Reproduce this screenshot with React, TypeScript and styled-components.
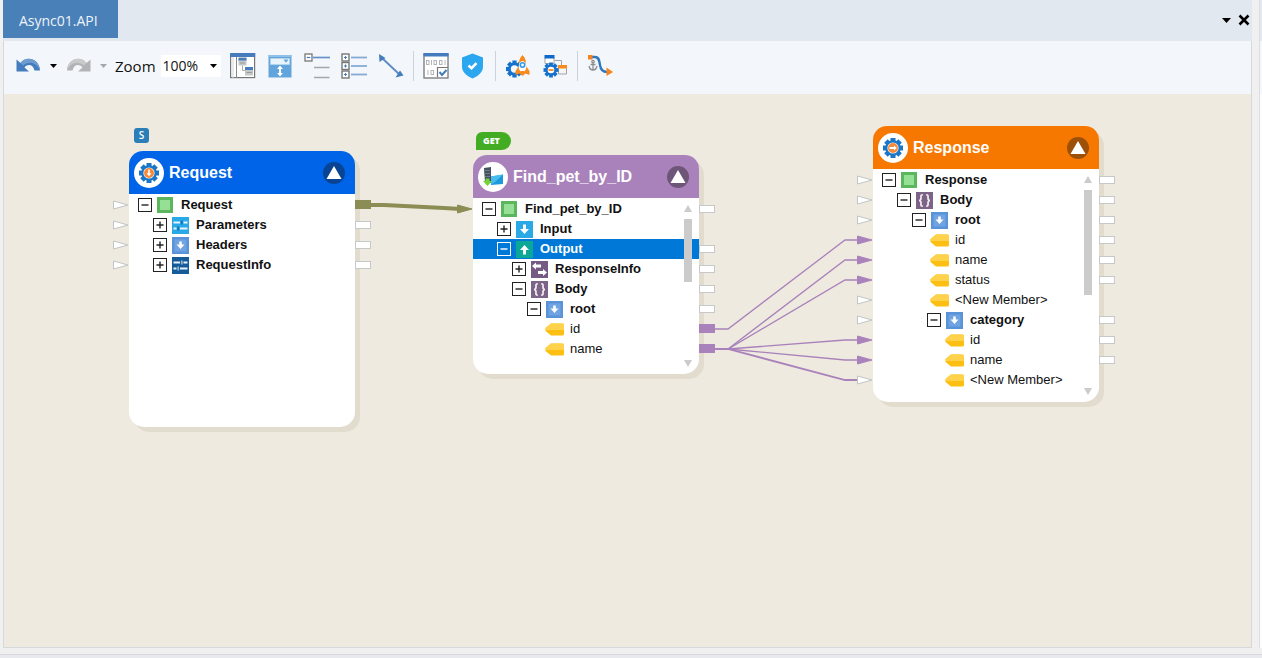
import React, { useState } from "react";
import styled, { createGlobalStyle } from "styled-components";

const GlobalStyle = createGlobalStyle`
  *, *::before, *::after { box-sizing: border-box; }
  body {
    margin: 0;
    background: #f0f0f0;
    font-family: "Liberation Sans", Arial, sans-serif;
    color: #111;
  }
  button { border: 0; padding: 0; background: none; font: inherit; color: inherit; }
  svg { display: block; }
  ul { list-style: none; margin: 0; padding: 0; }
`;

const uiFont = `"Open Sans", "Noto Sans", sans-serif`;

/* ---------- shell ---------- */

const Shell = styled.div`
  display: grid;
  grid-template-columns: minmax(0, 1fr) 3px;
  grid-template-rows: minmax(0, 1fr) 4px;
  column-gap: 7px;
  row-gap: 6px;
  min-height: 100vh;
`;

const Editor = styled.main`
  display: flex;
  flex-direction: column;
  padding-left: 3px;
`;

const DockEdge = styled.div`
  border-left: 1px solid #dcdde0;
  background: linear-gradient(#e1e8ef 41px, #f3f6fa 41px, #f3f6fa 94px, #fdfdfd 94px);
`;

const StatusEdge = styled.div`
  grid-column: 1 / -1;
  border-top: 1px solid #d8d9df;
  background: #e8e9ee;
`;

const TabBar = styled.header`
  display: flex;
  align-items: flex-start;
  height: 41px;
  background: #e1e8ef;
`;

const Tab = styled.button`
  height: 38px;
  padding: 2px 20px 0 16px;
  background: #4a80b8;
  color: #eef3f9;
  font-family: ${uiFont};
  font-size: 14px;
`;

const TabActions = styled.div`
  display: flex;
  align-items: center;
  gap: 6px;
  height: 38px;
  margin-left: auto;
  padding: 2px 2px 0 0;
`;

const TinyButton = styled.button`
  display: grid;
  place-items: center;
  width: ${(p: { $w: number }) => p.$w}px;
  height: 20px;
`;

const Frame = styled.section`
  flex: 1;
  display: flex;
  flex-direction: column;
  border: 1px solid #d6d9db;
  border-top: 0;
`;

/* ---------- toolbar ---------- */

const Toolbar = styled.div`
  display: flex;
  align-items: center;
  height: 53px;
  padding: 0 11px 3px;
  background: #f3f7fb;
`;

const History = styled.div`
  display: flex;
  align-items: center;
  gap: 7px;
`;

const ZoomLabel = styled.label`
  display: flex;
  align-items: center;
  gap: 5px;
  margin: 0 9px 0 7px;
  font-family: ${uiFont};
  font-size: 15px;
`;

const SelectWrap = styled.span`
  position: relative;
  display: block;
  background: #fff;
`;

const ZoomSelect = styled.select`
  display: block;
  appearance: none;
  width: 60px;
  height: 22px;
  padding: 0 2px 2px;
  border: 0;
  background: transparent;
  font-family: ${uiFont};
  font-size: 14px;
  color: #111;
`;

const SelectArrow = styled.span`
  position: absolute;
  right: 4px;
  top: 9px;
  pointer-events: none;
`;

const ToolGroup = styled.div`
  display: flex;
  align-items: center;
  gap: 11px;
  height: 30px;
  & + & {
    margin-left: 9px;
    padding-left: 9px;
    border-left: 1px solid #cdd3da;
  }
`;

const ToolButton = styled.button`
  display: grid;
  place-items: center;
  width: 26px;
  height: 28px;
`;

/* ---------- canvas ---------- */

const Canvas = styled.div`
  flex: 1;
  position: relative;
  min-height: 340px;
  overflow: hidden;
  background: #efeadf;
`;

const WireLayer = styled.svg`
  position: absolute;
  inset: 0;
  width: 100%;
  height: 100%;
  pointer-events: none;
`;

const NodeCard = styled.article<{ $x: number; $y: number; $h: number }>`
  position: absolute;
  left: ${(p) => p.$x}px;
  top: ${(p) => p.$y}px;
  width: 226px;
  height: ${(p) => p.$h}px;
  border-radius: 15px;
  background: #fff;
  box-shadow: 5px 5px 0 #e2dccf;
`;

const NodeHeader = styled.header<{ $color: string }>`
  display: flex;
  align-items: center;
  height: 43px;
  margin-bottom: 1px;
  padding: 0 10px 0 5px;
  border-radius: 14px 14px 0 0;
  background: ${(p) => p.$color};
`;

const Avatar = styled.span`
  display: grid;
  place-items: center;
  width: 30px;
  height: 30px;
  border-radius: 50%;
  background: #fff;
`;

const NodeTitle = styled.h2`
  flex: 1;
  margin: 0 0 0 5px;
  font-size: 16px;
  line-height: 20px;
  font-weight: bold;
  color: #fff;
`;

const CollapseButton = styled.button`
  display: grid;
  place-items: center;
  width: 22px;
  height: 22px;
  border-radius: 50%;
  background: rgba(20, 20, 20, 0.4);
`;

const Row = styled.li<{ $selected?: boolean; $bold?: boolean; $depth: number }>`
  position: relative;
  display: flex;
  align-items: center;
  height: 20px;
  padding-left: ${(p) => 9 + p.$depth * 15}px;
  font-size: 13px;
  line-height: 20px;
  white-space: nowrap;
  font-weight: ${(p) => (p.$bold ? "bold" : "normal")};
  color: ${(p) => (p.$selected ? "#fff" : "#111")};
  background: ${(p) => (p.$selected ? "#0078d7" : "transparent")};
`;

const Expander = styled.button`
  width: 14px;
  height: 14px;
`;

const ExpanderSpace = styled.span`
  width: 14px;
`;

const RowIcon = styled.span`
  display: grid;
  place-items: center;
  width: 18px;
  margin: 0 7px 0 4px;
`;

const InPort = styled.svg`
  position: absolute;
  right: 100%;
  top: 5px;
`;

const OutPort = styled.span<{ $color?: string }>`
  position: absolute;
  left: 100%;
  top: ${(p) => (p.$color ? 5 : 6)}px;
  width: 16px;
  height: ${(p) => (p.$color ? 9 : 8)}px;
  border: ${(p) => (p.$color ? "0" : "1px solid #c6c8ca")};
  background: ${(p) => p.$color || "#fff"};
`;

const ScrollTrack = styled.div`
  position: absolute;
  right: 7px;
  top: 50px;
  bottom: 7px;
  width: 8px;
  display: flex;
  flex-direction: column;
  align-items: center;
  justify-content: space-between;
`;

const ScrollThumb = styled.div<{ $h: number }>`
  width: 8px;
  height: ${(p) => p.$h}px;
  margin: 7px 0 auto;
  background: #cbcbcb;
`;

const MethodBadge = styled.span`
  position: absolute;
  left: 3px;
  bottom: calc(100% + 5px);
  width: 35px;
  height: 18px;
  padding-left: 7px;
  border-radius: 6px 9px 9px 0;
  background: #42ad22;
  color: #fff;
  font-family: ${uiFont};
  font-size: 9px;
  line-height: 18px;
  font-weight: 800;
`;

const StartBadge = styled.span`
  position: absolute;
  left: 5px;
  bottom: calc(100% + 8px);
  width: 15px;
  height: 15px;
  border-radius: 3px;
  background: #2a7fb9;
  color: #fff;
  font-family: ${uiFont};
  font-size: 10px;
  line-height: 15px;
  font-weight: 600;
  text-align: center;
`;

/* ---------- small drawings ---------- */

const Caret = ({ color = "#000", w = 7 }: { color?: string; w?: number }) => (
  <svg width={w} height={w > 7 ? 5 : 4} viewBox="0 0 7 4" preserveAspectRatio="none"><path d="M0 0h7L3.5 4z" fill={color} /></svg>
);

const Cog = ({ color, cx, cy, r }: { color: string; cx: number; cy: number; r: number }) => (
  <g fill={color}>
    {[0, 45, 90, 135].map((a) => (
      <rect key={a} x={cx - r * 0.25} y={cy - r} width={r * 0.5} height={r * 2} transform={`rotate(${a} ${cx} ${cy})`} />
    ))}
    <circle cx={cx} cy={cy} r={r * 0.77} />
  </g>
);

const UndoIcon = () => (
  <svg width="26" height="20" viewBox="0 0 26 20">
    <path d="M1.500 3.500V15.500H14L9.500 11.500C13 7.500 18 8.500 19.500 14.500H25C24.500 3 11.500-1 5.500 7z" fill="#447cbd" />
    <path d="M5.500 7C11.500-1 24.500 3 25 14.500 22 6.500 13.500 4.500 8 9.500z" fill="#6f9dd0" />
  </svg>
);

const RedoIcon = () => (
  <svg width="26" height="20" viewBox="0 0 26 20">
    <g transform="translate(27 0) scale(-1 1)">
      <path d="M1.500 3.500V15.500H14L9.500 11.500C13 7.500 18 8.500 19.500 14.500H25C24.500 3 11.500-1 5.500 7z" fill="#b1b3b6" />
      <path d="M5.500 7C11.500-1 24.500 3 25 14.500 22 6.500 13.500 4.500 8 9.500z" fill="#c8cacc" />
    </g>
  </svg>
);

const LayoutIcon = () => (
  <svg width="26" height="26" viewBox="0 0 26 26">
    <rect x=".6" y=".6" width="24" height="24" fill="#fff" stroke="#777" strokeWidth="1.200" />
    <path d="M0 0h25.200v4H0z" fill="#447cbd" />
    <path d="M6.500 4v21" stroke="#888" />
    <path d="M3 4v21" stroke="#d3d6d9" />
    <path d="M12.500 12.500v5h3" fill="none" stroke="#aaa" />
    <rect x="8.500" y="4" width="8" height="8.500" fill="#c5c8cb" /><path d="M8.500 5h8v2.500h-8z" fill="#447cbd" />
    <rect x="15" y="14" width="8" height="8.500" fill="#c5c8cb" /><path d="M15 14h8v3h-8z" fill="#447cbd" />
    <path d="M10 10h5M16.500 19.500H22" stroke="#999" />
  </svg>
);

const FitIcon = () => (
  <svg width="24" height="24" viewBox="0 0 24 24">
    <path d="M.5 1h23v22.500H.5z" fill="#62a4dc" />
    <path d="M.5 1h23v2H.5z" fill="#8fc0e8" />
    <path d="M2.500 4.500h19v6h-19z" fill="#e9f3fb" stroke="#b4d4ee" />
    <path d="M15.500 5.500h5L18 8.800z" fill="#62a4dc" />
    <path d="M12 11.500l3 3.500h-2v4h2l-3 3.500L9 19h2v-4H9z" fill="#fff" />
  </svg>
);

const CollapseTreeIcon = () => (
  <svg width="26" height="28" viewBox="0 0 26 28">
    <rect x="1" y="2" width="7" height="7" fill="#fff" stroke="#777" strokeWidth="1.300" />
    <path d="M2.800 5.500h3.500" stroke="#447cbd" strokeWidth="1.200" />
    <path d="M9 5.500h17" stroke="#6593c8" strokeWidth="1.700" />
    <path d="M10 15.500h15.500M10 25.500h15.500" stroke="#a4a7aa" strokeWidth="1.300" />
  </svg>
);

const ExpandTreeIcon = () => (
  <svg width="26" height="26" viewBox="0 0 26 26">
    {[1, 9.5, 18].map((y) => (
      <g key={y}>
        <rect x="1" y={y} width="7" height="7" fill="#fff" stroke="#777" strokeWidth="1.400" />
        <path d={`M3 ${y + 3.5}h3M4.500 ${y + 2}v3`} stroke="#447cbd" />
        <path d={`M10 ${y + 3.5}h16`} stroke="#85abd5" strokeWidth="1.800" />
      </g>
    ))}
  </svg>
);

const LinkIcon = () => (
  <svg width="26" height="26" viewBox="0 0 26 26">
    <path d="M4 5l17 16" stroke="#5a8bc5" strokeWidth="1.800" />
    <path d="M1 1l.5 8 6-4zM25.500 22.500l-8 2 4.500-7z" fill="#447cbd" />
  </svg>
);

const DataCheckIcon = () => (
  <svg width="26" height="26" viewBox="0 0 26 26">
    <rect x="1" y="1" width="24" height="24" fill="#fff" stroke="#777" strokeWidth="1.300" />
    <path d="M.5 0h25v3.500H.5z" fill="#447cbd" />
    <g fill="none" stroke="#b2b5b8">
      <rect x="3.500" y="7.500" width="2.500" height="4" /><path d="M8.500 7v5" />
      <rect x="11" y="7.500" width="2.500" height="4" /><rect x="16.500" y="7.500" width="2.500" height="4" />
      <path d="M22 7v5M5 17v5" /><rect x="8" y="17.500" width="2.500" height="4" />
    </g>
    <path d="M14.500 24.500v-10H25" fill="#fff" stroke="#777" strokeWidth="1.200" />
    <path d="M16.500 19l2.500 3 4.500-5" fill="none" stroke="#447cbd" strokeWidth="2" />
  </svg>
);

const ShieldIcon = () => (
  <svg width="23" height="26" viewBox="0 0 23 26">
    <path d="M11.500.5L22 4.500v9c0 6-5 9.500-10.500 12C6 23 1 19.500 1 13.500v-9z" fill="#2ba7ef" />
    <path d="M7.500 12.500l3 2.700 5-5" fill="none" stroke="#fff" strokeWidth="2.600" />
  </svg>
);

const RocketCogIcon = () => (
  <svg width="26" height="26" viewBox="0 0 26 26">
    <Cog color="#1671ce" cx={9.5} cy={16} r={8.5} />
    <circle cx="9.500" cy="16" r="3.700" fill="#f3f7fb" />
    <path d="M17.500 2c3 3 4 6.500 3.500 11l3.500 5v4l-4-1.500-3 2.500-3-2.500-4 1.500v-4l3.500-5c-.5-4.500.5-8 3.500-11z" fill="#f98a1d" />
    <ellipse cx="17.500" cy="13.500" rx="3.800" ry="5.500" fill="#fff" />
    <circle cx="17.500" cy="12" r="2.200" fill="none" stroke="#2b9bea" strokeWidth="1.600" />
    <path d="M15.500 18h4l-2 3z" fill="#f98a1d" />
  </svg>
);

const FlowCogIcon = () => (
  <svg width="26" height="26" viewBox="0 0 26 26">
    <path d="M3 4.500h9v6H3z" fill="#fff" stroke="#a0a3a6" /><path d="M2.500 2h10v3.500h-10z" fill="#0f68cc" />
    <path d="M13 7.500h6.500V12" fill="none" stroke="#a0a3a6" />
    <path d="M16.500 13.500h8v7.500h-8z" fill="#f5f5f5" stroke="#a0a3a6" /><path d="M16 12h9v3.500h-9z" fill="#f98a1d" />
    <Cog color="#1671ce" cx={9} cy={17} r={7.5} />
    <circle cx="9" cy="17" r="3.300" fill="#fff" />
    <path d="M6.500 17h5" stroke="#f98a1d" strokeWidth="1.800" />
  </svg>
);

const AnchorWireIcon = () => (
  <svg width="26" height="26" viewBox="0 0 26 26">
    <path d="M3 4h5c4 0 4.500 4 5 8 .6 4.500 2.500 7 7 7h1" fill="none" stroke="#2c77bf" strokeWidth="2.300" />
    <path d="M1 2h4.500v4.500H1z" fill="#f5831f" />
    <path d="M19.500 14.500L26 19l-6.500 4z" fill="#f5831f" />
    <g fill="none" stroke="#8b8f92" strokeWidth="1.300">
      <circle cx="6" cy="8.500" r="1.200" /><path d="M6 9.500v7.500M3.500 11.500h5M2 13c.5 2.500 1.500 4 4 4s3.500-1.500 4-4" />
    </g>
  </svg>
);

const ApiCog = ({ inner }: { inner: "down" | "across" }) => (
  <svg width="24" height="24" viewBox="0 0 24 24">
    <Cog color="#1b76c8" cx={12} cy={12} r={10} />
    <circle cx="12" cy="12" r="5.600" fill="#fff" />
    <circle cx="12" cy="12" r="5" fill="#f58a3c" />
    {inner === "down"
      ? <path d="M11.200 8.500h1.600v3.700h1.700L12 15.200l-2.500-3h1.700z" fill="#fff" />
      : <path d="M8.500 11h4.500V9.600l2.800 2.400-2.800 2.400V13H8.500z" fill="#fff" />}
  </svg>
);

const ServerIcon = () => (
  <svg width="22" height="22" viewBox="0 0 22 22">
    <path d="M2 2l7-1v16H3z" fill="#44515e" />
    <path d="M3 4.500h5M3 7.500h5M3 10.500h5" stroke="#6d7f8d" strokeWidth="1.200" />
    <path d="M9 10.500l12-2v9.500l-12 1z" fill="#1a99dc" /><path d="M9 10.500l12-2-9 8.500-3 1z" fill="#48bbef" />
    <path d="M3.500 12.500h4V15H10l-4.500 5L1 15h2.500z" fill="#76d13b" />
  </svg>
);

type Kind = "green" | "params" | "headers" | "info" | "input" | "output" | "swap" | "braces" | "field";

const Glyph = ({ kind }: { kind: Kind }) => {
  if (kind === "field")
    return (
      <svg width="20" height="13" viewBox="0 0 20 13">
        <path d="M6 .5h11.500q1.500 0 1.500 1.500v9q0 1.500-1.500 1.500H6L.5 8V5z" fill="#fdbf12" />
        <path d="M6 .5h11.500q1.500 0 1.500 1.500v5H.5V5z" fill="#ffd24c" />
      </svg>
    );
  if (kind === "green")
    return (
      <svg width="16" height="16" viewBox="0 0 16 16">
        <path d="M0 0h16v16H0z" fill="#5cb65e" /><path d="M3 3h10v10H3z" fill="#96e095" />
      </svg>
    );
  const bg = {
    params: "#29a9e6", headers: "#5a93d8", info: "#155a99", input: "#29a9e6",
    output: "#0aa896", swap: "#765a86", braces: "#7b6486",
  }[kind];
  return (
    <svg width="17" height="17" viewBox="0 0 17 17">
      <path d="M0 0h17v17H0z" fill={bg} />
      {(kind === "params" || kind === "info") && (
        <>
          <path d="M1.500 5.500H8M11.500 5.500h4M1.500 11.500h3M8 11.500h7.500" fill="none" stroke="#e8f4fb" strokeWidth="1.800" />
          <path d="M9.800 3.500v4M6.200 9.500v4" stroke={kind === "info" ? "#8fb6d8" : "#1471b5"} strokeWidth="1.800" />
        </>
      )}
      {kind === "headers" && (
        <>
          <path d="M2.500 2.500h12v12h-12z" fill="#6fa3e2" />
          <path d="M7.200 4.500h2.600v3h2.700l-4 4.500-4-4.500h2.700z" fill="#fff" />
        </>
      )}
      {kind === "input" && <path d="M7 3.500h3v4.500h3L8.500 13 4 8h3z" fill="#fff" />}
      {kind === "output" && <path d="M7 13.500h3V9h3L8.500 4 4 9h3z" fill="#fff" />}
      {kind === "swap" && (
        <path d="M1 5L5 1.500v2h5v3H5v2zM16 11.500L12 8v2H7v3h5v2z" fill="#fff" />
      )}
      {kind === "braces" && (
        <g fill="none" stroke="#f4eef6" strokeWidth="1.700">
          <path d="M6.800 2.800C4.500 2.800 5 4 5 6c0 1.500-.5 2.500-2 2.500 1.500 0 2 1 2 2.500 0 2-.5 3.200 1.800 3.200" />
          <path d="M10.200 2.800C12.500 2.800 12 4 12 6c0 1.500.5 2.500 2 2.500-1.500 0-2 1-2 2.500 0 2 .5 3.200-1.800 3.200" />
        </g>
      )}
    </svg>
  );
};

const ExpanderGlyph = ({ open, light }: { open: boolean; light?: boolean }) => {
  const c = light ? "#fff" : "#222";
  return (
    <svg width="14" height="14" viewBox="0 0 14 14">
      <rect x=".5" y=".5" width="13" height="13" fill={light ? "none" : "#fff"} stroke={c} />
      <path d={open ? "M3.500 7h7" : "M3.500 7h7M7 3.500v7"} stroke={c} strokeWidth="1.400" />
    </svg>
  );
};

/* ---------- data ---------- */

const PURPLE = "#a982bb";
const OLIVE = "#8b8d54";

type Port = "open" | string;
type Item = {
  label: string; depth: number; icon: Kind; open?: boolean;
  leaf?: boolean; selected?: boolean; in?: Port; out?: Port;
};
type FlowNode = {
  id: string; title: string; color: string; x: number; y: number; h: number;
  icon: React.ReactNode; badge?: React.ReactNode; thumb?: number; items: Item[];
};

const nodes: FlowNode[] = [
  {
    id: "request", title: "Request", color: "#0064e8", x: 125, y: 57, h: 276,
    icon: <ApiCog inner="down" />, badge: <StartBadge>S</StartBadge>,
    items: [
      { label: "Request", depth: 0, icon: "green", open: true, in: "open", out: OLIVE },
      { label: "Parameters", depth: 1, icon: "params", in: "open", out: "open" },
      { label: "Headers", depth: 1, icon: "headers", in: "open", out: "open" },
      { label: "RequestInfo", depth: 1, icon: "info", in: "open", out: "open" },
    ],
  },
  {
    id: "find", title: "Find_pet_by_ID", color: PURPLE, x: 469, y: 61, h: 219,
    icon: <ServerIcon />, badge: <MethodBadge>GET</MethodBadge>, thumb: 63,
    items: [
      { label: "Find_pet_by_ID", depth: 0, icon: "green", open: true, in: OLIVE, out: "open" },
      { label: "Input", depth: 1, icon: "input" },
      { label: "Output", depth: 1, icon: "output", open: true, selected: true, out: "open" },
      { label: "ResponseInfo", depth: 2, icon: "swap", out: "open" },
      { label: "Body", depth: 2, icon: "braces", open: true, out: "open" },
      { label: "root", depth: 3, icon: "headers", open: true, out: "open" },
      { label: "id", depth: 3, icon: "field", leaf: true, out: PURPLE },
      { label: "name", depth: 3, icon: "field", leaf: true, out: PURPLE },
    ],
  },
  {
    id: "response", title: "Response", color: "#f77800", x: 869, y: 32, h: 276,
    icon: <ApiCog inner="across" />, thumb: 105,
    items: [
      { label: "Response", depth: 0, icon: "green", open: true, in: "open", out: "open" },
      { label: "Body", depth: 1, icon: "braces", open: true, in: "open", out: "open" },
      { label: "root", depth: 2, icon: "headers", open: true, in: "open", out: "open" },
      { label: "id", depth: 2, icon: "field", leaf: true, in: PURPLE, out: "open" },
      { label: "name", depth: 2, icon: "field", leaf: true, in: PURPLE, out: "open" },
      { label: "status", depth: 2, icon: "field", leaf: true, in: PURPLE, out: "open" },
      { label: "<New Member>", depth: 2, icon: "field", leaf: true, in: "open" },
      { label: "category", depth: 3, icon: "headers", open: true, in: "open", out: "open" },
      { label: "id", depth: 3, icon: "field", leaf: true, in: PURPLE, out: "open" },
      { label: "name", depth: 3, icon: "field", leaf: true, in: PURPLE, out: "open" },
      { label: "<New Member>", depth: 3, icon: "field", leaf: true, in: "open" },
    ],
  },
];

/* [from node, from row, to node, to row, width] */
const wires: [number, number, number, number, number][] = [
  [1, 6, 2, 3, 1.3],
  [1, 7, 2, 4, 1.3],
  [1, 7, 2, 5, 1.3],
  [1, 7, 2, 8, 1.3],
  [1, 7, 2, 9, 1.3],
  [1, 7, 2, 10, 1.8],
];

const rowY = (n: FlowNode, row: number) => n.y + 54 + row * 20;

const wirePath = (a: FlowNode, ar: number, b: FlowNode, br: number) => {
  const x1 = a.x + 242;
  const x2 = b.x - 16;
  return `M${x1} ${rowY(a, ar)}H${x1 + 13}L${x2 - 12} ${rowY(b, br)}H${x2}`;
};

const tools: [string, React.ReactNode][][] = [
  [
    ["Overview", <LayoutIcon />], ["Fit height", <FitIcon />], ["Collapse tree", <CollapseTreeIcon />],
    ["Expand tree", <ExpandTreeIcon />], ["Link", <LinkIcon />],
  ],
  [["Data check", <DataCheckIcon />], ["Validate", <ShieldIcon />]],
  [["Deploy", <RocketCogIcon />], ["Flow settings", <FlowCogIcon />]],
  [["Anchor connection", <AnchorWireIcon />]],
];

const FlowCard = ({ node }: { node: FlowNode }) => (
  <NodeCard $x={node.x} $y={node.y} $h={node.h}>
    {node.badge}
    <NodeHeader $color={node.color}>
      <Avatar>{node.icon}</Avatar>
      <NodeTitle>{node.title}</NodeTitle>
      <CollapseButton aria-label={`Collapse ${node.title}`}>
        <svg width="16" height="14" viewBox="0 0 16 14"><path d="M8 0l7.500 13H.5z" fill="#fff" /></svg>
      </CollapseButton>
    </NodeHeader>
    <ul>
      {node.items.map((it, i) => (
        <Row key={i} $depth={it.depth} $bold={!it.leaf} $selected={it.selected}>
          {it.in && (
            <InPort width="16" height="10" viewBox="0 0 16 10">
              <path d="M.5 1L15 5 .5 9z" fill={it.in === "open" ? "#fff" : it.in} stroke={it.in === "open" ? "#c2c4c6" : it.in} />
            </InPort>
          )}
          {it.leaf ? <ExpanderSpace /> : (
            <Expander aria-label={`Toggle ${it.label}`}><ExpanderGlyph open={!!it.open} light={it.selected} /></Expander>
          )}
          <RowIcon><Glyph kind={it.icon} /></RowIcon>
          {it.label}
          {it.out && <OutPort $color={it.out === "open" ? undefined : it.out} />}
        </Row>
      ))}
    </ul>
    {node.thumb && (
      <ScrollTrack>
        <svg width="8" height="7" viewBox="0 0 8 7"><path d="M4 0l4 7H0z" fill="#cbcbcb" /></svg>
        <ScrollThumb $h={node.thumb} />
        <svg width="8" height="7" viewBox="0 0 8 7"><path d="M0 0h8L4 7z" fill="#cbcbcb" /></svg>
      </ScrollTrack>
    )}
  </NodeCard>
);

export default function App() {
  const [zoom, setZoom] = useState("100%");
  return (
    <>
      <GlobalStyle />
      <Shell>
        <Editor>
          <TabBar>
            <Tab>Async01.API</Tab>
            <TabActions>
              <TinyButton $w={12} aria-label="Open documents"><Caret w={9} /></TinyButton>
              <TinyButton $w={12} aria-label="Close">
                <svg width="12" height="12" viewBox="0 0 12 12"><path d="M1.500 1.500l9 9M10.500 1.500l-9 9" stroke="#000" strokeWidth="2.600" /></svg>
              </TinyButton>
            </TabActions>
          </TabBar>
          <Frame>
            <Toolbar>
              <History>
                <TinyButton $w={26} aria-label="Undo"><UndoIcon /></TinyButton>
                <TinyButton $w={10} aria-label="Undo history"><Caret /></TinyButton>
                <TinyButton $w={26} aria-label="Redo"><RedoIcon /></TinyButton>
                <TinyButton $w={10} aria-label="Redo history"><Caret color="#a5a7aa" /></TinyButton>
              </History>
              <ZoomLabel>
                Zoom
                <SelectWrap>
                  <ZoomSelect value={zoom} onChange={(e) => setZoom(e.target.value)}>
                    {["50%", "75%", "100%", "150%"].map((z) => <option key={z}>{z}</option>)}
                  </ZoomSelect>
                  <SelectArrow><Caret /></SelectArrow>
                </SelectWrap>
              </ZoomLabel>
              {tools.map((group, g) => (
                <ToolGroup key={g}>
                  {group.map(([name, icon]) => (
                    <ToolButton key={name} aria-label={name}>{icon}</ToolButton>
                  ))}
                </ToolGroup>
              ))}
            </Toolbar>
            <Canvas>
              {nodes.map((n) => <FlowCard key={n.id} node={n} />)}
              <WireLayer>
                <path
                  d={`M367 ${rowY(nodes[0], 0)}H380L440 ${rowY(nodes[1], 0) - 1}L456 ${rowY(nodes[1], 0)}`}
                  fill="none" stroke={OLIVE} strokeWidth="4"
                />
                {wires.map(([a, ar, b, br, w], i) => (
                  <path key={i} d={wirePath(nodes[a], ar, nodes[b], br)} fill="none" stroke={PURPLE} strokeWidth={w} />
                ))}
              </WireLayer>
            </Canvas>
          </Frame>
        </Editor>
        <DockEdge />
        <StatusEdge />
      </Shell>
    </>
  );
}
